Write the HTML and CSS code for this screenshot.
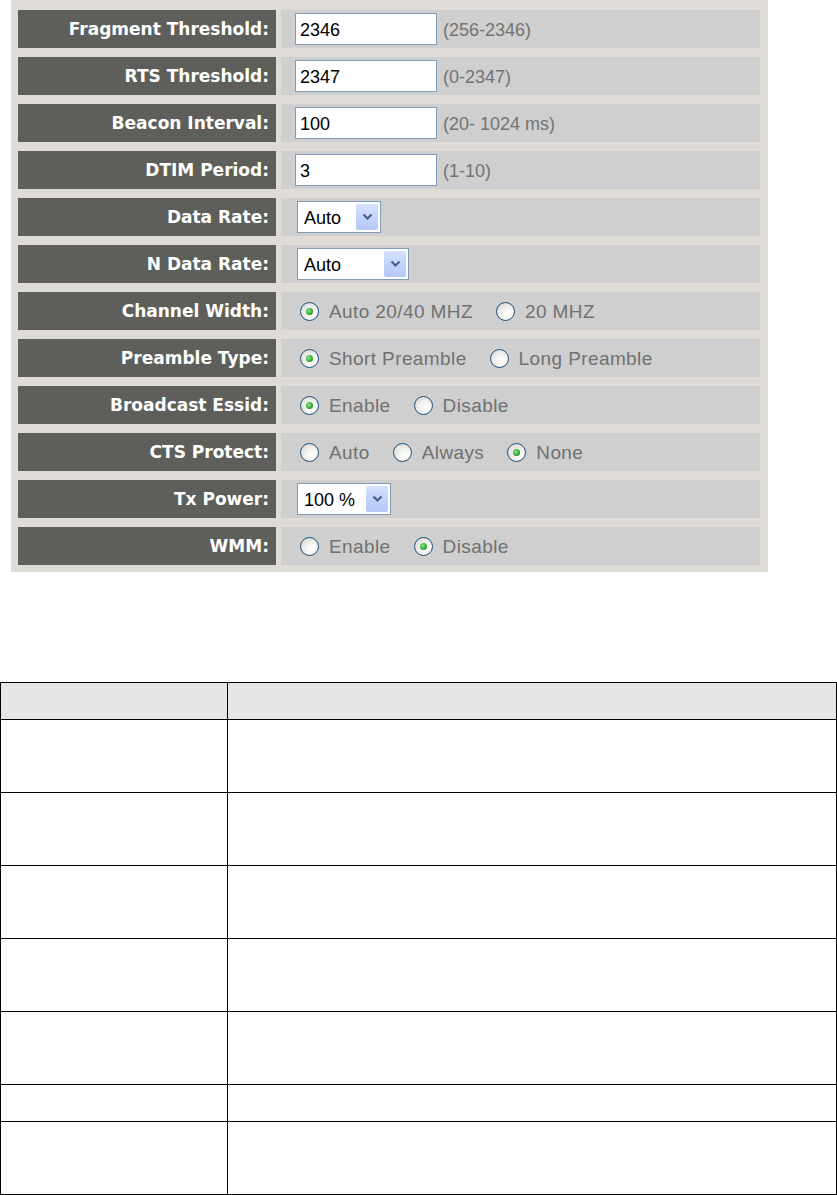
FILE: index.html
```html
<!DOCTYPE html>
<html lang="en">
<head>
<meta charset="utf-8">
<title>Wireless Advanced Settings</title>
<link rel="stylesheet" href="styles.css">
</head>
<body>
<div class="panel">
  <div class="row">
    <div class="label">Fragment Threshold:</div>
    <div class="value"><input class="text" type="text" value="2346"><span class="hint">(256-2346)</span></div>
  </div>
  <div class="row">
    <div class="label">RTS Threshold:</div>
    <div class="value"><input class="text" type="text" value="2347"><span class="hint">(0-2347)</span></div>
  </div>
  <div class="row">
    <div class="label">Beacon Interval:</div>
    <div class="value"><input class="text" type="text" value="100"><span class="hint">(20- 1024 ms)</span></div>
  </div>
  <div class="row">
    <div class="label">DTIM Period:</div>
    <div class="value"><input class="text" type="text" value="3"><span class="hint">(1-10)</span></div>
  </div>
  <div class="row">
    <div class="label">Data Rate:</div>
    <div class="value">
      <span class="select w-rate"><span class="select-text">Auto</span><span class="select-btn"><svg width="11" height="8" viewBox="0 0 11 8"><path d="M1.5 1.5 L5.5 5.5 L9.5 1.5" fill="none" stroke="#4a5f86" stroke-width="2.2"/></svg></span></span>
    </div>
  </div>
  <div class="row">
    <div class="label">N Data Rate:</div>
    <div class="value">
      <span class="select w-nrate"><span class="select-text">Auto</span><span class="select-btn"><svg width="11" height="8" viewBox="0 0 11 8"><path d="M1.5 1.5 L5.5 5.5 L9.5 1.5" fill="none" stroke="#4a5f86" stroke-width="2.2"/></svg></span></span>
    </div>
  </div>
  <div class="row">
    <div class="label">Channel Width:</div>
    <div class="value radios">
      <label class="opt"><span class="radio on"></span>Auto 20/40 MHZ</label>
      <label class="opt"><span class="radio"></span>20 MHZ</label>
    </div>
  </div>
  <div class="row">
    <div class="label">Preamble Type:</div>
    <div class="value radios">
      <label class="opt"><span class="radio on"></span>Short Preamble</label>
      <label class="opt"><span class="radio"></span>Long Preamble</label>
    </div>
  </div>
  <div class="row">
    <div class="label">Broadcast Essid:</div>
    <div class="value radios">
      <label class="opt"><span class="radio on"></span>Enable</label>
      <label class="opt"><span class="radio"></span>Disable</label>
    </div>
  </div>
  <div class="row">
    <div class="label">CTS Protect:</div>
    <div class="value radios">
      <label class="opt"><span class="radio"></span>Auto</label>
      <label class="opt"><span class="radio"></span>Always</label>
      <label class="opt"><span class="radio on"></span>None</label>
    </div>
  </div>
  <div class="row">
    <div class="label">Tx Power:</div>
    <div class="value">
      <span class="select w-power"><span class="select-text">100 %</span><span class="select-btn"><svg width="11" height="8" viewBox="0 0 11 8"><path d="M1.5 1.5 L5.5 5.5 L9.5 1.5" fill="none" stroke="#4a5f86" stroke-width="2.2"/></svg></span></span>
    </div>
  </div>
  <div class="row">
    <div class="label">WMM:</div>
    <div class="value radios">
      <label class="opt"><span class="radio"></span>Enable</label>
      <label class="opt"><span class="radio on"></span>Disable</label>
    </div>
  </div>
</div>

<table class="desc">
  <thead>
    <tr class="head"><th class="c1"></th><th class="c2"></th></tr>
  </thead>
  <tbody>
    <tr class="tall"><td></td><td></td></tr>
    <tr class="tall"><td></td><td></td></tr>
    <tr class="tall"><td></td><td></td></tr>
    <tr class="tall"><td></td><td></td></tr>
    <tr class="tall"><td></td><td></td></tr>
    <tr class="short"><td></td><td></td></tr>
    <tr class="tall"><td></td><td></td></tr>
  </tbody>
</table>
</body>
</html>
```

FILE: styles.css
```css
html, body {
  margin: 0;
  padding: 0;
  background: #ffffff;
}

body {
  font-family: "Liberation Sans", Arial, sans-serif;
}

.panel {
  margin-left: 11px;
  width: 742px;
  padding: 10px 8px 7px 7px;
  background: #dfdcd7;
  display: flex;
  flex-direction: column;
  gap: 9px;
}

.row {
  display: grid;
  grid-template-columns: 258px 479px;
  column-gap: 5px;
  height: 38px;
}

.label {
  background: #5e5f5b;
  color: #ffffff;
  font-family: "DejaVu Sans", Verdana, sans-serif;
  font-weight: bold;
  font-size: 17px;
  text-align: right;
  padding-right: 7px;
  display: flex;
  align-items: center;
  justify-content: flex-end;
}

.value {
  background: #cfcfcf;
  display: flex;
  align-items: center;
  padding-left: 14px;
}

.text {
  box-sizing: border-box;
  width: 142px;
  height: 32px;
  margin: 0;
  border: 1px solid #7f9db9;
  background: #ffffff;
  padding: 2px 0 0 4px;
  font-family: "Liberation Sans", Arial, sans-serif;
  font-size: 18px;
  color: #000000;
  outline: none;
}

.hint {
  margin-left: 6px;
  margin-top: 3px;
  font-size: 18px;
  color: #737373;
}

.select {
  box-sizing: border-box;
  display: inline-flex;
  align-items: stretch;
  height: 32px;
  margin-left: 2px;
  border: 1px solid #7f9db9;
  background: #ffffff;
  padding: 2px;
}

.w-rate { width: 84px; }
.w-nrate { width: 112px; }
.w-power { width: 94px; }

.select-text {
  flex: 1;
  display: flex;
  align-items: center;
  padding-left: 4px;
  padding-top: 2px;
  font-size: 18px;
  color: #000000;
}

.select-btn {
  width: 22px;
  display: flex;
  align-items: center;
  justify-content: center;
  background: linear-gradient(180deg, #d6e2fe 0%, #c2d3fc 50%, #b4c7f8 100%);
  border-radius: 2px;
}

.radios {
  padding-left: 19px;
  gap: 23px;
}

.opt {
  display: inline-flex;
  align-items: center;
  gap: 10px;
  font-size: 19px;
  letter-spacing: 0.4px;
  color: #717171;
  padding-top: 2px;
}

.radio {
  box-sizing: border-box;
  width: 19px;
  height: 19px;
  border-radius: 50%;
  border: 1.5px solid #1c5180;
  background: radial-gradient(circle at 65% 65%, #ffffff 0%, #f4f4f2 35%, #d2d2cc 100%);
  display: inline-flex;
  align-items: center;
  justify-content: center;
  margin-top: -2px;
}

.radio.on::after {
  content: "";
  width: 7px;
  height: 7px;
  border-radius: 50%;
  background: radial-gradient(circle at 40% 40%, #8ee88e 0%, #2aa52a 60%, #1d8a1d 100%);
}

.desc {
  margin-top: 110px;
  width: 837px;
  border-collapse: collapse;
  table-layout: fixed;
}

.desc th,
.desc td {
  border: 1.5px solid #000000;
  padding: 0;
}

.desc .c1 { width: 226px; }

.desc .head {
  height: 37px;
}

.desc .head th {
  background: #e6e6e6;
}

.desc .tall { height: 73px; }
.desc .short { height: 37px; }
```
